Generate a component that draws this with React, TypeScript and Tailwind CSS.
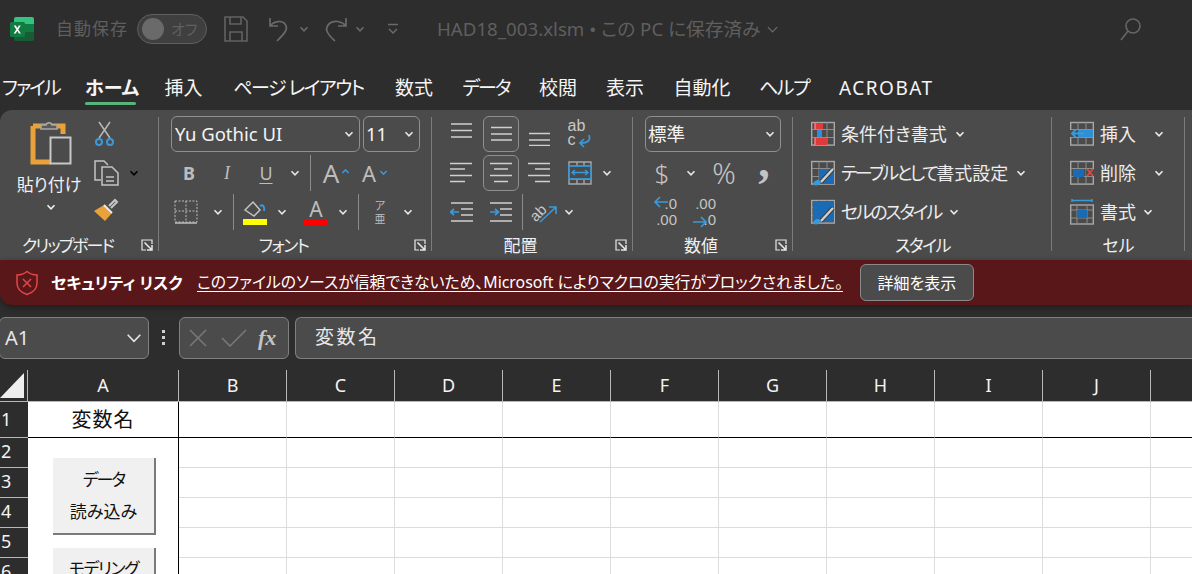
import type { ReactNode } from 'react';

const FONT = "font-['Noto_Sans','Noto_Sans_CJK_JP',sans-serif] [font-feature-settings:'palt']";

function Chev({ className = 'text-[#e6e6e6]', size = 10, weight = 1.6 }: { className?: string; size?: number; weight?: number }) {
  return (
    <svg width={size} height={size} viewBox="0 0 10 10" className={className} fill="none" stroke="currentColor" strokeWidth={weight}>
      <path d="M1.5 3.2 5 6.8l3.5-3.6" />
    </svg>
  );
}

function Launcher() {
  return (
    <svg width="12" height="12" viewBox="0 0 12 12" fill="none" stroke="#e8e8e8" strokeWidth="1.2">
      <path d="M11 5V1H1v10h4" />
      <path d="M3.5 3.5 10.5 10.500M6 11h5V6" strokeWidth="1.5" />
    </svg>
  );
}

function ExcelLogo() {
  return (
    <svg width="24" height="26" viewBox="0 0 24 26">
      <path d="M6 1h16a2 2 0 0 1 2 2v5H4V3a2 2 0 0 1 2-2z" fill="#33c481" />
      <rect x="4" y="8" width="20" height="8" fill="#21a366" />
      <path d="M4 16h20v7a2 2 0 0 1-2 2H6a2 2 0 0 1-2-2z" fill="#185c37" />
      <rect x="14" y="8" width="10" height="8" fill="#107c41" />
      <rect x="0" y="6" width="15" height="15" rx="1.5" fill="#107c41" />
      <path d="m3.800 9.500 2.500 4-2.600 4h2l1.600-2.700 1.600 2.700h2l-2.600-4 2.500-4h-2L7.300 12 5.800 9.500z" fill="#fff" />
    </svg>
  );
}

function Box({ w, children, className = '' }: { w: number; children?: ReactNode; className?: string }) {
  return (
    <div className={`flex shrink-0 items-center justify-center ${className}`} style={{ width: w }}>
      {children}
    </div>
  );
}

function Sep() {
  return <div className="h-9 w-px shrink-0 bg-[#8c8c8c]" />;
}

function Combo({ label, w, className = '' }: { label: string; w: number; className?: string }) {
  return (
    <div className={`flex h-9 items-center justify-between rounded-md border border-[#8f8f8f] pl-[2px] pr-[5px] text-[#f4f4f4] ${className}`} style={{ width: w }}>
      <span className="whitespace-nowrap text-[18.500px]">{label}</span>
      <Chev />
    </div>
  );
}

function Group({ label, w, launcher = true, labelClass = '', children }: { label: string; w: number; launcher?: boolean; labelClass?: string; children: ReactNode }) {
  return (
    <div className="relative flex h-full shrink-0 flex-col" style={{ width: w }}>
      <div className="flex-1">{children}</div>
      <div className={`mb-[3px] text-center text-[17px] leading-[22px] text-[#f0f0f0] ${launcher ? 'pr-[24px]' : ''} ${labelClass}`}>{label}</div>
      {launcher && (
        <div className="absolute bottom-[9px] right-[6px]">
          <Launcher />
        </div>
      )}
      <div className="absolute bottom-[9px] right-0 top-[7px] w-px bg-[#7c7c7c]" />
    </div>
  );
}

function Lines({ kind, boxed = false }: { kind: 'top' | 'mid' | 'bot' | 'left' | 'center' | 'right'; boxed?: boolean }) {
  const paths = {
    top: 'M2 1h21M2 7.500h21M2 14h21',
    mid: 'M3 4.500h21M3 11h21M3 17h21',
    bot: 'M2 10.500h21M2 17h21M2 22.500h21',
    left: 'M1 1.500h22M1 7h15M1 13.500h22M1 19.500h15',
    center: 'M2 1.500h22M6 7h14M2 13.500h22M6 19.500h14',
    right: 'M1 1.500h22M8 7h15M1 13.500h22M8 19.500h15',
  };
  const svg = (
    <svg width="26" height="23" viewBox="0 0 26 23" fill="none" stroke="#cfcfcf" strokeWidth="1.300">
      <path d={paths[kind]} />
    </svg>
  );
  if (boxed) {
    return <div className="flex h-9 w-9 items-center justify-center rounded-md border border-[#8f8f8f] bg-[#505050]">{svg}</div>;
  }
  return svg;
}

function Indent({ right = false }: { right?: boolean }) {
  return (
    <svg width="24" height="22" viewBox="0 0 24 22" fill="none">
      <path d="M1 2h22M11 8h12M11 14h12M1 20h22" stroke="#cfcfcf" strokeWidth="1.500" />
      <path d={right ? 'M1 11h8M6 8l3.500 3-3.500 3' : 'M9 11H1M4 8l-3.500 3L4 14'} stroke="#3a9ad9" strokeWidth="1.700" />
    </svg>
  );
}

function GridIcon({ children }: { children: ReactNode }) {
  return (
    <svg width="24" height="26" viewBox="0 0 24 26" fill="none" className="shrink-0">
      <rect x="0.700" y="1.500" width="22.600" height="22.600" stroke="#a8a8a8" strokeWidth="1.400" />
      <path d="M1 8.500h22M1 16.500h22M8 1v23M16 1v23" stroke="#8e8e8e" />
      {children}
    </svg>
  );
}

function Brush() {
  return (
    <>
      <path d="M10 22 22 9" stroke="#3c3c3c" strokeWidth="4.500" />
      <path d="M10 22 22 9" stroke="#cfcfcf" strokeWidth="2.500" />
      <path d="M2 25c0-3 2-5 6-5l2 2c-1 3-4 4-8 3z" fill="#3a9ad9" />
    </>
  );
}

const tabs = [
  { label: 'ファイル', w: 57, ml: 'ml-[2px]', cls: 'tracking-[-2px]' },
  { label: 'ホーム', w: 51, ml: 'ml-[26px]', cls: 'font-bold', active: true },
  { label: '挿入', w: 39, ml: 'ml-[28px]', cls: '' },
  { label: 'ページ レイアウト', w: 131, ml: 'ml-[30px]', cls: 'tracking-[-1.500px]' },
  { label: '数式', w: 40, ml: 'ml-[30px]', cls: '' },
  { label: 'データ', w: 48, ml: 'ml-[28px]', cls: 'tracking-[-2px]' },
  { label: '校閲', w: 40, ml: 'ml-[28px]', cls: '' },
  { label: '表示', w: 40, ml: 'ml-[27px]', cls: '' },
  { label: '自動化', w: 60, ml: 'ml-[27px]', cls: '' },
  { label: 'ヘルプ', w: 49, ml: 'ml-[27px]', cls: 'tracking-[-1.500px]' },
  { label: 'ACROBAT', w: 94, ml: 'ml-[31px]', cls: 'tracking-[1.500px]' },
];

const columns = ['B', 'C', 'D', 'E', 'F', 'G', 'H', 'I', 'J', ''];
const rowHeights = [36, 30, 30, 30, 30, 30];

export default function App() {
  return (
    <div className={`flex h-[574px] w-[1192px] flex-col overflow-hidden bg-[#2d2d2d] ${FONT}`}>
      {/* title bar */}
      <div className="flex h-[58px] shrink-0 items-center text-[#5f5f5f]">
        <div className="ml-[10px]">
          <ExcelLogo />
        </div>
        <span className="ml-[22px] text-[17px] tracking-[1px]">自動保存</span>
        <div className="ml-[9px] flex h-[30px] w-[70px] items-center rounded-full border border-[#5f5f5f] bg-[#3f3f3f] pl-1">
          <div className="h-[22px] w-[22px] rounded-full bg-[#6a6a6a]" />
          <span className="ml-[7px] text-[15px]">オフ</span>
        </div>
        <svg width="24" height="26" viewBox="0 0 24 26" fill="none" stroke="#626262" strokeWidth="1.600" className="ml-[17px]">
          <path d="M1 1h18l4 4v20H1zM6 1v7h11V1M6 25v-9h12v9" />
        </svg>
        <svg width="26" height="26" viewBox="0 0 26 26" fill="none" stroke="#6a6a6a" strokeWidth="1.700" className="ml-[19px]">
          <path d="M3 2v8h8M3 10c4-5 12-6 15-2 4 5-1 10-8 17" />
        </svg>
        <Chev className="ml-[6px] text-[#6a6a6a]" />
        <svg width="26" height="26" viewBox="0 0 26 26" fill="none" stroke="#6a6a6a" strokeWidth="1.700" className="ml-[14px]">
          <path d="M23 2v8h-8M23 10C19 5 11 4 7 7c-6 5-4 10 5 18" />
        </svg>
        <Chev className="ml-[6px] text-[#6a6a6a]" />
        <svg width="14" height="12" viewBox="0 0 14 12" fill="none" stroke="#6a6a6a" strokeWidth="1.500" className="ml-[21px]">
          <path d="M2 1.500h10M3 6l4 4 4-4" />
        </svg>
        <span className="ml-[37px] whitespace-nowrap text-[18.700px]">HAD18_003.xlsm • この PC に保存済み</span>
        <Chev className="ml-[6px] text-[#6a6a6a]" size={13} weight={1} />
        <svg width="24" height="24" viewBox="0 0 24 24" fill="none" stroke="#666" strokeWidth="1.600" className="ml-auto mr-[49px]">
          <circle cx="14" cy="9" r="7" />
          <path d="M9 14 2 23" />
        </svg>
      </div>

      {/* tabs */}
      <div className="flex h-[52px] shrink-0 items-center pt-[8px] text-[#f5f5f5]">
        {tabs.map((t) => (
          <div key={t.label} className={`relative whitespace-nowrap text-center text-[19px] leading-[30px] ${t.ml} ${t.cls}`} style={{ width: t.w }}>
            {t.label}
            {t.active && <div className="absolute -bottom-[2px] left-0 h-[3px] w-full rounded-full bg-[#57b57c]" />}
          </div>
        ))}
      </div>

      {/* ribbon */}
      <div className="flex h-[150px] shrink-0 rounded-tl-xl bg-[#4b4b4b]">
        <Group label="クリップボード" w={159} labelClass="tracking-[-2px]">
          <div className="flex">
            <div className="ml-[14px] flex w-[70px] flex-col items-center pt-[12px]">
              <svg width="44" height="46" viewBox="0 0 44 46" fill="none" className="ml-[6px]">
                <path d="M3 4h30v8M3 4v36h18" stroke="#e9a13b" strokeWidth="5" />
                <path d="M11 7V3h5c1-3 5-3 6 0h5v4z" fill="#5a5a5a" stroke="#a8a8a8" strokeWidth="1.600" />
                <rect x="20.500" y="15.500" width="20" height="26" fill="#4b4b4b" stroke="#c8c8c8" strokeWidth="2" />
              </svg>
              <span className="mt-[6px] whitespace-nowrap text-[17px] leading-[22px] text-[#f0f0f0]">貼り付け</span>
              <Chev className="ml-[4px] mt-[6px] text-[#f0f0f0]" />
            </div>
            <div className="ml-[9px] flex flex-col items-start pt-[11px]">
              <svg width="22" height="26" viewBox="0 0 22 26" fill="none" className="ml-[1px]">
                <path d="M5 1l11 16M16 1 5 17" stroke="#b8b8b8" strokeWidth="1.500" />
                <circle cx="5" cy="21" r="3" stroke="#3a9ad9" strokeWidth="2" />
                <circle cx="16" cy="21" r="3" stroke="#3a9ad9" strokeWidth="2" />
              </svg>
              <div className="mt-[13px] flex items-center">
                <svg width="26" height="26" viewBox="0 0 26 26" fill="none" stroke="#c4c4c4" strokeWidth="1.500">
                  <path d="M8 20H2V1h9l4 4" />
                  <path d="M9 7h10l6 6v12H9zM13 17h8M13 21h8" />
                </svg>
                <Chev className="ml-[10px]" />
              </div>
              <svg width="26" height="24" viewBox="0 0 26 24" fill="none" className="mt-[12px]">
                <path d="M16 8 22 2l2 2-6 6" stroke="#c8c8c8" strokeWidth="2" />
                <path d="M1 13 11 7l8 8-7 8z" fill="#e9a13b" />
                <path d="M11 7l8 8" stroke="#e8e8e8" strokeWidth="2" />
              </svg>
            </div>
          </div>
        </Group>

        <Group label="フォント" w={273} labelClass="tracking-[-1.500px]">
          <div className="ml-[12px] flex flex-col">
            <div className="mt-[6px] flex gap-[3px]">
              <Combo label="Yu Gothic UI" w={189} className="pl-[3px]" />
              <Combo label="11" w={57} />
            </div>
            <div className="mt-[3px] flex h-9 items-center text-[#bdbdbd]">
              <Box w={36} className="text-[18px] font-bold">B</Box>
              <Box w={40} className="font-['Liberation_Serif',serif] text-[18px] italic">I</Box>
              <Box w={38} className="text-[18px] underline underline-offset-[3px]">U</Box>
              <Box w={20}><Chev /></Box>
              <Box w={10}><Sep /></Box>
              <Box w={38} className="relative pr-[6px] text-[26px] leading-none">
                A
                <Chev className="absolute right-[3px] top-[7px] rotate-180 text-[#3a9ad9]" size={9} />
              </Box>
              <Box w={38} className="relative pr-[6px] text-[22px] leading-none">
                A
                <Chev className="absolute right-[3px] top-[6px] text-[#3a9ad9]" size={9} />
              </Box>
            </div>
            <div className="mt-[3px] flex h-9 items-center text-[#bdbdbd]">
              <Box w={30}>
                <svg width="24" height="24" viewBox="0 0 24 24" fill="none" stroke="#bdbdbd" strokeDasharray="2 1.500">
                  <path d="M1 1h22v21H1zM12 1v21M1 11h22" />
                  <path d="M1 23h22" strokeDasharray="0" strokeWidth="1.500" />
                </svg>
              </Box>
              <Box w={28} className="pl-[6px]"><Chev /></Box>
              <Box w={8}><Sep /></Box>
              <Box w={36}>
                <svg width="24" height="26" viewBox="0 0 24 26" fill="none">
                  <path d="M2 11 10 3l7 8-6 6z" stroke="#c4c4c4" strokeWidth="1.500" />
                  <path d="M17 7c3-2 5 1 4 5" stroke="#3a9ad9" strokeWidth="2" />
                  <rect y="20" width="24" height="6" fill="#ffff00" />
                </svg>
              </Box>
              <Box w={18}><Chev /></Box>
              <Box w={44} className="pl-[6px]">
                <div className="flex w-6 flex-col items-center text-[21px] leading-[20px]">
                  A
                  <div className="h-[6px] w-full bg-[#ff0000]" />
                </div>
              </Box>
              <Box w={16}><Chev /></Box>
              <Box w={14}><Sep /></Box>
              <Box w={30} className="text-center text-[11px] leading-[13px]">ア<br />亜</Box>
              <Box w={26}><Chev /></Box>
            </div>
          </div>
        </Group>

        <Group label="配置" w={201}>
          <div className="ml-[10px] flex flex-col">
            <div className="mt-[6px] flex h-9 items-center">
              <Box w={39}><Lines kind="top" /></Box>
              <Box w={39}><Lines kind="mid" boxed /></Box>
              <Box w={39}><Lines kind="bot" /></Box>
              <Box w={41} className="font-['Liberation_Sans',sans-serif] text-[16px] leading-[14px] text-[#c8c8c8]">
                <div className="relative h-[30px] w-[24px]">
                  ab
                  <br />c
                  <svg width="14" height="14" viewBox="0 0 14 14" fill="none" stroke="#3a9ad9" strokeWidth="1.700" className="absolute bottom-[1px] right-0">
                    <path d="M11 1c2 6-2 8-8 8M6 5 2 9l4 4" />
                  </svg>
                </div>
              </Box>
            </div>
            <div className="mt-[3px] flex h-9 items-center">
              <Box w={39}><Lines kind="left" /></Box>
              <Box w={39}><Lines kind="center" boxed /></Box>
              <Box w={39}><Lines kind="right" /></Box>
              <Box w={41}>
                <svg width="24" height="24" viewBox="0 0 24 24" fill="none">
                  <path d="M1 1h22v22H1zM1 6h22M1 18h22M9 18v5M16 18v5M9 1v5M16 1v5" stroke="#a8a8a8" strokeWidth="1.400" />
                  <rect x="1" y="5" width="22" height="13" stroke="#3a9ad9" strokeWidth="1.700" fill="#4b4b4b" />
                  <path d="M4 11.500h16M7 9l-3 2.500L7 14M17 9l3 2.500-3 2.500" stroke="#3a9ad9" strokeWidth="1.400" />
                </svg>
              </Box>
              <Box w={14}><Chev /></Box>
            </div>
            <div className="mt-[3px] flex h-9 items-center">
              <Box w={39}><Indent /></Box>
              <Box w={39}><Indent right /></Box>
              <Box w={4}><Sep /></Box>
              <Box w={38} className="relative">
                <span className="absolute left-[6px] top-[5px] -rotate-45 font-['Liberation_Sans',sans-serif] text-[15px] text-[#c8c8c8]">ab</span>
                <svg width="30" height="30" viewBox="0 0 30 30" fill="none" stroke="#3a9ad9" strokeWidth="1.600">
                  <path d="M12 25 28 10M21 10h7v7" />
                </svg>
              </Box>
              <Box w={14}><Chev /></Box>
            </div>
          </div>
        </Group>

        <Group label="数値" w={160}>
          <div className="ml-[12px] flex flex-col">
            <div className="mt-[6px]">
              <Combo label="標準" w={136} />
            </div>
            <div className="mt-[3px] flex h-9 items-center text-[#c4c4c4]">
              <Box w={34} className="text-[26px] font-light">$</Box>
              <Box w={24}><Chev /></Box>
              <Box w={42} className="text-[29px] font-light">%</Box>
              <Box w={38} className="pb-[22px] font-['Liberation_Serif',serif] text-[46px] font-bold leading-none">,</Box>
            </div>
            <div className="mt-[3px] flex h-9 items-center font-['Liberation_Sans',sans-serif] text-[15px] leading-[16px] text-[#c4c4c4]">
              <Box w={40}>
                <div className="relative h-[32px] w-[24px] whitespace-nowrap text-right">
                  .0<br />.00
                  <svg width="16" height="12" viewBox="0 0 16 12" fill="none" stroke="#3a9ad9" strokeWidth="1.700" className="absolute left-0 top-0">
                    <path d="M15 6H2M7 1 2 6l5 5" />
                  </svg>
                </div>
              </Box>
              <Box w={38}>
                <div className="relative h-[32px] w-[24px] whitespace-nowrap text-right">
                  .00<br />.0
                  <svg width="16" height="12" viewBox="0 0 16 12" fill="none" stroke="#3a9ad9" strokeWidth="1.700" className="absolute bottom-0 left-0">
                    <path d="M1 6h13M9 1l5 5-5 5" />
                  </svg>
                </div>
              </Box>
            </div>
          </div>
        </Group>

        <Group label="スタイル" w={259} launcher={false} labelClass="tracking-[-1.500px]">
          <div className="ml-[18px] flex flex-col gap-[13px] pt-[11px] text-[18px] leading-[26px] text-[#ececec]">
            <div className="flex items-center gap-[6px]">
              <GridIcon>
                <rect x="4" y="2" width="8" height="6" fill="#e03a3a" />
                <rect x="6" y="9" width="5" height="7" fill="#2f8fd6" />
                <rect x="4" y="17" width="12" height="7" fill="#e03a3a" />
                <path d="M4 1v7M4 17v7" stroke="#ff7a7a" strokeWidth="1.500" />
              </GridIcon>
              <span className="whitespace-nowrap">条件付き書式</span>
              <Chev className="ml-[2px]" />
            </div>
            <div className="flex items-center gap-[6px]">
              <GridIcon>
                <path d="M8 9h15v15H8z" fill="#1a6bb5" />
                <Brush />
              </GridIcon>
              <span className="whitespace-nowrap"><span className="tracking-[-2.500px]">テーブルとして</span>書式設定</span>
              <Chev className="ml-[2px]" />
            </div>
            <div className="flex items-center gap-[6px]">
              <GridIcon>
                <path d="M2 2h21v21H2z" fill="#1a6bb5" />
                <Brush />
              </GridIcon>
              <span className="whitespace-nowrap tracking-[-2.300px]">セルのスタイル</span>
              <Chev className="ml-[2px]" />
            </div>
          </div>
        </Group>

        <Group label="セル" w={133} launcher={false}>
          <div className="ml-[18px] flex flex-col gap-[13px] pt-[11px] text-[18px] leading-[26px] text-[#ececec]">
            <div className="flex items-center gap-[6px]">
              <GridIcon>
                <rect x="0" y="9" width="8" height="7" fill="#4b4b4b" />
                <rect x="8" y="9" width="15" height="7" fill="#2f8fd6" />
                <path d="M14 12.500H2M6 8.500l-4 4 4 4" stroke="#3a9ad9" strokeWidth="1.800" />
              </GridIcon>
              <span>挿入</span>
              <Chev className="ml-[12px]" />
            </div>
            <div className="flex items-center gap-[6px]">
              <GridIcon>
                <rect x="16" y="9" width="8" height="7" fill="#4b4b4b" />
                <rect x="3" y="9" width="11" height="8" fill="#1a6bb5" />
                <path d="M17 9l6 7M23 9l-6 7" stroke="#e84545" strokeWidth="1.800" />
              </GridIcon>
              <span>削除</span>
              <Chev className="ml-[12px]" />
            </div>
            <div className="flex items-center gap-[6px]">
              <svg width="24" height="26" viewBox="0 0 24 26" fill="none" className="shrink-0">
                <path d="M2 1.500h20M2 0v3M22 0v3" stroke="#3a9ad9" strokeWidth="1.500" />
                <rect x="0.700" y="6" width="22.600" height="19" stroke="#a8a8a8" strokeWidth="1.400" />
                <path d="M1 11h22M1 19h22M7 6v19M17 6v19" stroke="#8e8e8e" />
                <rect x="7" y="11" width="10" height="8" fill="#1a6bb5" />
              </svg>
              <span>書式</span>
              <Chev className="ml-[1px]" />
            </div>
          </div>
        </Group>
      </div>

      {/* security banner */}
      <div className="z-10 flex h-[45px] shrink-0 items-center rounded-bl-xl bg-[#5a1719] text-[15.850px] text-white shadow-[0_2px_6px_rgba(0,0,0,0.4)]">
        <svg width="24" height="26" viewBox="0 0 24 26" fill="none" stroke="#e2474b" strokeWidth="1.500" className="ml-[15px]">
          <path d="M12 1.500c3 2.500 6 3.500 10 3.500v8c0 6-4 9.500-10 11.500C6 22.500 2 19 2 13V5c4 0 7-1 10-3.500z" />
          <path d="m8 9 8 8M16 9l-8 8" />
        </svg>
        <span className="ml-[12px] w-[132px] whitespace-nowrap text-[16px] font-bold">セキュリティ リスク</span>
        <span className="ml-[14px] whitespace-nowrap underline underline-offset-[3px]">このファイルのソースが信頼できないため、Microsoft によりマクロの実行がブロックされました。</span>
        <div className="ml-[17px] flex h-[37px] w-[114px] items-center justify-center rounded-md border border-[#8a8a8a] bg-[#4b4b4b] text-[16px]">詳細を表示</div>
      </div>

      {/* formula bar */}
      <div className="flex h-[65px] shrink-0 items-center text-[#e8e8e8]">
        <div className="-ml-px flex h-[42px] w-[150px] items-center justify-between rounded-md border border-[#808080] bg-[#4b4b4b] pl-[5px] pr-[5px]">
          <span className="text-[20px]">A1</span>
          <Chev size={18} weight={0.9} />
        </div>
        <div className="ml-[13px] flex w-[4px] flex-col gap-[3px]">
          <div className="h-[3px] w-[3px] bg-[#cfcfcf]" />
          <div className="h-[3px] w-[3px] bg-[#cfcfcf]" />
          <div className="h-[3px] w-[3px] bg-[#cfcfcf]" />
        </div>
        <div className="ml-[13px] flex h-[42px] w-[110px] items-center rounded-md border border-[#808080] bg-[#4b4b4b] pl-[9px]">
          <svg width="20" height="18" viewBox="0 0 20 18" stroke="#7a7a7a" strokeWidth="1.500" fill="none">
            <path d="m1 1 16 16M17 1 1 17" />
          </svg>
          <svg width="26" height="18" viewBox="0 0 26 18" stroke="#7a7a7a" strokeWidth="1.500" fill="none" className="ml-[12px]">
            <path d="m1 9 8 8L25 1" />
          </svg>
          <span className="ml-[11px] font-['Liberation_Serif',serif] text-[22px] font-bold italic text-[#c4c4c4]">fx</span>
        </div>
        <div className="ml-[6px] flex h-[42px] flex-1 items-center rounded-l-md border-y border-l border-[#808080] bg-[#4b4b4b] pl-[19px] text-[19px] tracking-[2.500px]">変数名</div>
      </div>

      {/* column headers */}
      <div className="flex h-[32px] shrink-0 border-b border-[#b8b8b8] text-[18px] text-[#f4f4f4]">
        <div className="relative h-full w-[28px] shrink-0 border-r border-[#b8b8b8]">
          <svg width="24" height="25" viewBox="0 0 24 25" className="absolute bottom-[3px] left-0">
            <path d="M24 0v25H0z" fill="#eeeeee" />
          </svg>
        </div>
        <div className="flex w-[151px] shrink-0 items-center justify-center border-r border-[#b8b8b8]">A</div>
        {columns.map((c) => (
          <div key={c} className="flex w-[108px] shrink-0 items-center justify-center border-r border-[#b8b8b8]">{c}</div>
        ))}
      </div>

      {/* sheet */}
      <div className="relative flex-1 bg-white">
        {rowHeights.map((h, i) => (
          <div key={i} className="flex" style={{ height: h }}>
            <div className={`flex w-[28px] shrink-0 items-center border-b border-[#b8b8b8] bg-[#2d2d2d] pl-[1px] text-[18px] text-[#f4f4f4] ${i > 0 ? 'pb-[3px]' : ''}`}>{i + 1}</div>
            <div className={`flex w-[151px] shrink-0 items-center justify-center border-r border-black text-[20px] tracking-[1px] text-[#111] ${i === 0 ? 'border-b border-b-black' : ''}`}>
              {i === 0 && '変数名'}
            </div>
            {columns.map((c) => (
              <div key={c} className={`w-[108px] shrink-0 border-b border-r border-r-[#dcdcdc] ${i === 0 ? 'border-b-black' : 'border-b-[#dcdcdc]'}`} />
            ))}
          </div>
        ))}
        <div className="absolute left-[53px] top-[56px] flex h-[77px] w-[103px] flex-col items-center justify-center border-b-2 border-r-2 border-[#7a7a7a] bg-[#f0f0f0] text-[17px] leading-[32px] text-[#111]">
          <span className="tracking-[-2px]">データ</span>
          <span>読み込み</span>
        </div>
        <div className="absolute left-[53px] top-[146px] flex h-[77px] w-[103px] flex-col items-center justify-start border-r-2 border-[#7a7a7a] bg-[#f0f0f0] pt-[5px] text-[17px] leading-[32px] text-[#111]">
          <span className="tracking-[-1.500px]">モデリング</span>
        </div>
      </div>
    </div>
  );
}
